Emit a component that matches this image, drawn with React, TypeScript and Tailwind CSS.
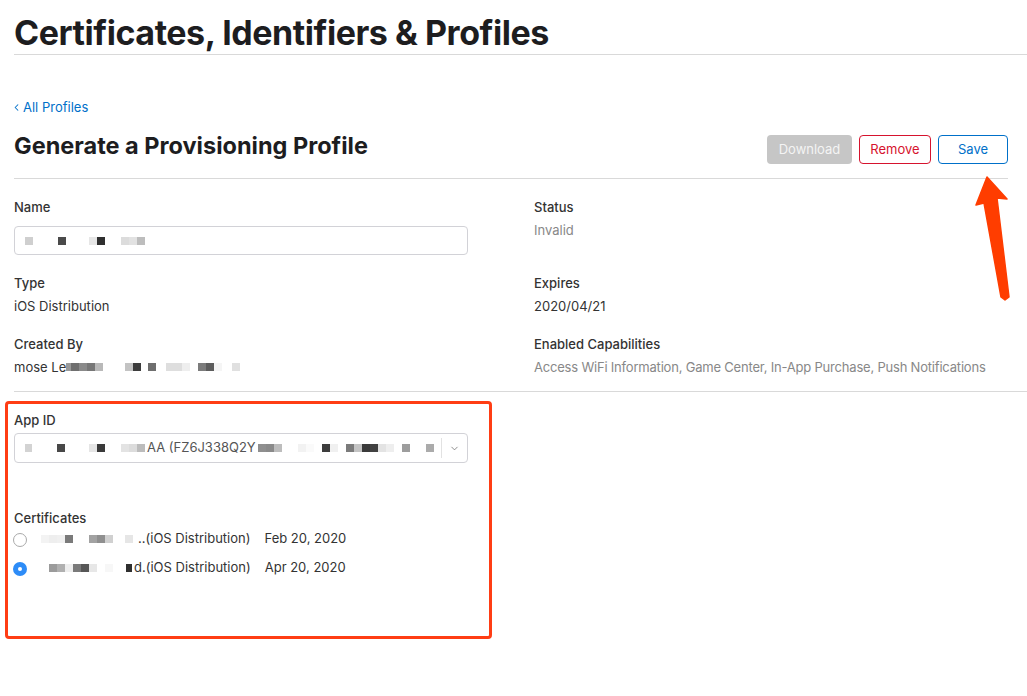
import { ChevronLeft, ChevronDown } from 'lucide-react';

// pixelated (redacted) bits of the screenshot, drawn as little squares
type Px = [number, string];

function Mosaic({ cells, size = 8 }: { cells: Px[]; size?: number }) {
  return (
    <span className="inline-flex items-center">
      {cells.map(([w, c], i) => (
        <span key={i} className="inline-block" style={{ width: w, height: size, background: c }} />
      ))}
    </span>
  );
}

function Field({ label, children }: { label: string; children: React.ReactNode }) {
  return (
    <div className="flex flex-col">
      <div className="text-[13px] leading-[18px] font-medium text-[#333]">{label}</div>
      {children}
    </div>
  );
}

function Radio({ checked }: { checked?: boolean }) {
  if (checked) {
    return (
      <span className="flex h-[14px] w-[14px] items-center justify-center rounded-full bg-[#2d8cf7]">
        <span className="h-[4px] w-[4px] rounded-full bg-white" />
      </span>
    );
  }
  return <span className="block h-[14px] w-[14px] rounded-full border border-[#a9a9a9] bg-white" />;
}

export default function App() {
  return (
    <div className="relative min-h-screen bg-white pl-[14px] font-['Inter',sans-serif] text-[#333]">
      <div className="border-b border-[#d9d9d9] pt-[13px] pb-[1px]">
        <h1 className="text-[34px] leading-[40px] font-bold tracking-[-0.45px] text-[#1d1d1f]">
          Certificates, Identifiers &amp; Profiles
        </h1>
      </div>

      <div className="pr-[19px]">
        <a className="mt-[43px] flex items-center gap-[1px] text-[13px] leading-[18px] text-[#0070c9]">
          <ChevronLeft size={11} strokeWidth={2.2} className="-ml-[3px]" />
          All Profiles
        </a>

        <div className="mt-[19px] flex items-start justify-between border-b border-[#d9d9d9] pb-[14px]">
          <h2 className="text-[23.5px] leading-[22px] font-bold text-[#1d1d1f]">Generate a Provisioning Profile</h2>
          <div className="flex items-center gap-[7px]">
            <button className="h-[29px] w-[85px] rounded-[4px] bg-[#c6c6c6] text-[13px] text-[#f4f4f4]">Download</button>
            <button className="h-[29px] w-[72px] rounded-[4px] border border-[#d6132e] bg-white text-[13px] text-[#d6132e]">Remove</button>
            <button className="h-[29px] w-[70px] rounded-[4px] border border-[#0070c9] bg-white text-[13px] text-[#0070c9]">Save</button>
          </div>
        </div>

        <div className="grid grid-cols-[520px_1fr] gap-y-[19px] pt-[19px]">
          <Field label="Name">
            <div className="mt-[10px] flex h-[29px] w-[454px] items-center rounded-[4px] border border-[#d2d2d7] pl-[10px]">
              <Mosaic
                cells={[
                  [8, '#cfcfcf'], [25, 'transparent'], [8, '#4a4a4a'], [23, 'transparent'],
                  [8, '#e6e6e6'], [8, '#2f2f2f'], [16, 'transparent'], [8, '#dcdcdc'], [8, '#e2e2e2'], [8, '#bdbdbd'],
                ]}
              />
            </div>
          </Field>
          <Field label="Status">
            <div className="mt-[5px] text-[13px] leading-[18px] text-[#888]">Invalid</div>
          </Field>

          <Field label="Type">
            <div className="mt-[5px] text-[13px] leading-[18px] text-[#333]">iOS Distribution</div>
          </Field>
          <Field label="Expires">
            <div className="mt-[5px] text-[13px] leading-[18px] text-[#333]">2020/04/21</div>
          </Field>

          <div className="mt-[1px]">
            <Field label="Created By">
              <div className="mt-[5px] flex items-center text-[13px] leading-[18px] text-[#333]">
                mose Le
                <Mosaic
                  cells={[
                    [5, '#9a9a9a'], [8, '#6f6f6f'], [8, '#8a8a8a'], [8, '#777'], [8, '#b9b9b9'], [22, 'transparent'],
                    [8, '#c3c3c3'], [8, '#3c3c3c'], [7, 'transparent'], [8, '#6e6e6e'], [10, 'transparent'],
                    [16, '#dedede'], [8, '#eeeeee'], [8, 'transparent'], [8, '#7c7c7c'], [8, '#5d5d5d'], [8, '#f5f5f5'],
                    [10, 'transparent'], [8, '#e0e0e0'],
                  ]}
                />
              </div>
            </Field>
          </div>
          <div className="mt-[1px]">
            <Field label="Enabled Capabilities">
              <div className="mt-[5px] text-[13px] leading-[18px] tracking-[-0.2px] text-[#888]">
                Access WiFi Information, Game Center, In-App Purchase, Push Notifications
              </div>
            </Field>
          </div>
        </div>
      </div>

      <div className="mt-[15px] border-b border-[#d9d9d9]" />

      <div className="pt-[19px]">
        <Field label="App ID">
          <div className="mt-[4px] flex h-[30px] w-[454px] items-center rounded-[4px] border border-[#d2d2d7]">
            <div className="flex flex-1 items-center gap-[2px] overflow-hidden pl-[10px] text-[13px] text-[#333]">
              <Mosaic
                cells={[
                  [7, '#d3d3d3'], [25, 'transparent'], [8, '#484848'], [24, 'transparent'], [8, '#e5e5e5'],
                  [8, '#3a3a3a'], [16, 'transparent'], [8, '#e3e3e3'], [8, '#dcdcdc'], [8, '#bcbcbc'],
                ]}
              />
              <span className="whitespace-nowrap text-[#555]">AA (FZ6J338Q2Y</span>
              <Mosaic
                cells={[
                  [8, '#8f8f8f'], [8, '#8a8a8a'], [8, '#bdbdbd'], [16, 'transparent'], [8, '#f2f2f2'], [8, '#fafafa'],
                  [8, 'transparent'], [8, '#3d3d3d'], [8, '#f0f0f0'], [8, 'transparent'], [8, '#7b7b7b'], [8, '#c4c4c4'],
                  [8, '#3a3a3a'], [8, '#414141'], [8, '#e3e3e3'], [8, '#eeeeee'], [8, 'transparent'], [8, '#9d9d9d'],
                  [16, 'transparent'], [8, '#ababab'],
                ]}
              />
            </div>
            <div className="h-[20px] border-l border-[#e2e2e2]" />
            <ChevronDown size={11} strokeWidth={1.8} className="mx-[7px] text-[#777]" />
          </div>
        </Field>

        <div className="mt-[46px]">
          <Field label="Certificates">
            <div className="mt-[2px] flex flex-col gap-[11px]">
              <div className="flex items-center text-[13px] leading-[18px] text-[#333]">
                <span className="mt-[4px] -ml-[1px]"><Radio /></span>
                <span className="ml-[14px] w-[97px]">
                  <Mosaic
                    cells={[
                      [8, '#f3f3f3'], [8, '#eeeeee'], [8, '#f0f0f0'], [8, '#7a7a7a'], [16, 'transparent'],
                      [8, '#a2a2a2'], [8, '#8f8f8f'], [8, '#d0d0d0'], [12, 'transparent'], [8, '#e6e6e6'],
                    ]}
                  />
                </span>
                <span className="whitespace-nowrap">..(iOS Distribution)</span>
                <span className="ml-[14px]">Feb 20, 2020</span>
              </div>
              <div className="flex items-center text-[13px] leading-[18px] text-[#333]">
                <span className="mt-[4px] -ml-[1px]"><Radio checked /></span>
                <span className="ml-[22px] w-[85px]">
                  <Mosaic
                    cells={[
                      [8, '#9b9b9b'], [8, '#b0b0b0'], [8, '#eeeeee'], [8, '#7a7a7a'], [8, '#575757'], [8, '#e7e7e7'],
                      [8, 'transparent'], [8, '#f7f7f7'], [13, 'transparent'], [6, '#2f2f2f'],
                    ]}
                  />
                </span>
                <span className="whitespace-nowrap">d.(iOS Distribution)</span>
                <span className="ml-[14px]">Apr 20, 2020</span>
              </div>
            </div>
          </Field>
        </div>
      </div>

      {/* annotation: red box round the App ID and certificates */}
      <div className="pointer-events-none absolute left-[5px] top-[401px] h-[238px] w-[487px] rounded-[4px] border-[3px] border-[#ff3d14]" />

      {/* annotation: arrow pointing at Save */}
      <svg className="pointer-events-none absolute left-0 top-0" width="1027" height="696">
        <polygon
          points="987,177 1007,199 997,198 1009,297 1005,300 1001,297 984,203 976,205"
          fill="#ff3d00"
          stroke="#ff3d00"
          strokeWidth="1.5"
          strokeLinejoin="round"
        />
      </svg>
    </div>
  );
}
